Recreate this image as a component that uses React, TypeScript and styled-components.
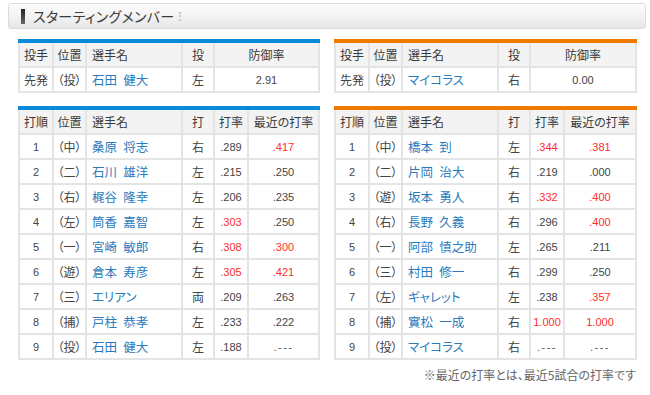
import styled, { createGlobalStyle } from 'styled-components';

const GlobalStyle = createGlobalStyle`
  body {
    margin: 0;
    background: #fff;
    font-family: 'Noto Sans CJK JP', 'Noto Sans', sans-serif;
    font-feature-settings: 'palt';
    color: #333;
  }
`;

const Page = styled.div`
  width: 650px;
  height: 395px;
  padding: 3px 0 0 8px;
  box-sizing: border-box;
`;

const TitleBar = styled.div`
  width: 638px;
  height: 26px;
  box-sizing: border-box;
  border: 1px solid #dcdcdc;
  border-radius: 3px;
  background: linear-gradient(#fcfcfc, #f3f3f3 50%, #e6e6e6);
  box-shadow: inset 0 1px 0 #fff;
  display: flex;
  align-items: center;
  padding-left: 12px;
`;

const TitleMark = styled.span`
  width: 4px;
  height: 15px;
  background: linear-gradient(#222, #666);
  margin-right: 8px;
`;

const TitleText = styled.h1`
  margin: 0;
  font-size: 14px;
  font-weight: normal;
  letter-spacing: 0.3px;
  color: #3a3a3a;
`;

const TitleDots = styled.span`
  width: 0;
  height: 9px;
  border-left: 2px dotted #c8c8c8;
  margin-left: 5px;
`;

const TeamGrid = styled.div<{ top: number }>`
  display: grid;
  grid-template-columns: 302px 303px;
  column-gap: 14px;
  margin: ${(p) => p.top}px 0 0 10px;
  align-items: start;
`;

const Table = styled.table<{ accent: string }>`
  width: 100%;
  border-collapse: collapse;
  border-top: 4px solid ${(p) => p.accent};
  table-layout: fixed;
  font-size: 12px;
`;

const Th = styled.th<{ left?: boolean }>`
  height: 23px;
  padding: 0 ${(p) => (p.left ? '5px' : '0')};
  border: 2px solid #e4e4e4;
  border-top: none;
  background: #f3f3f3;
  font-weight: normal;
  color: #3a3a3a;
  text-align: ${(p) => (p.left ? 'left' : 'center')};
  white-space: nowrap;
`;

const Td = styled.td<{ num?: boolean; hot?: boolean; left?: boolean }>`
  height: 23px;
  padding: 0 ${(p) => (p.left ? '5px' : '0')};
  border: 2px solid #e4e4e4;
  background: #fff;
  text-align: ${(p) => (p.left ? 'left' : 'center')};
  white-space: nowrap;
  color: ${(p) => (p.hot ? '#ff2d2d' : '#444')};
  font-family: ${(p) =>
    p.num ? "'Liberation Sans', Arial, sans-serif" : 'inherit'};
  font-size: ${(p) => (p.num ? '11px' : '12px')};
`;

const NoRecord = styled.span`
  letter-spacing: 1.5px;
  color: #555;
`;

const NameLink = styled.a`
  color: #2a7bbd;
  text-decoration: none;
  font-size: 12.5px;
`;

const Note = styled.p`
  margin: 7px 0 0;
  width: 628px;
  text-align: right;
  font-size: 12px;
  line-height: 16px;
  color: #666;
`;

const BLUE = '#0a8ad8';
const ORANGE = '#ee7a00';

type Batter = [string, string, string, string, string];

const home: Batter[] = [
  ['中', '桑原\u2002将志', '右', '.289', '.417'],
  ['二', '石川\u2002雄洋', '左', '.215', '.250'],
  ['右', '梶谷\u2002隆幸', '左', '.206', '.235'],
  ['左', '筒香\u2002嘉智', '左', '.303', '.250'],
  ['一', '宮崎\u2002敏郎', '右', '.308', '.300'],
  ['遊', '倉本\u2002寿彦', '左', '.305', '.421'],
  ['三', 'エリアン', '両', '.209', '.263'],
  ['捕', '戸柱\u2002恭孝', '左', '.233', '.222'],
  ['投', '石田\u2002健大', '左', '.188', '.---'],
];

const away: Batter[] = [
  ['中', '橋本\u2002到', '左', '.344', '.381'],
  ['二', '片岡\u2002治大', '右', '.219', '.000'],
  ['遊', '坂本\u2002勇人', '右', '.332', '.400'],
  ['右', '長野\u2002久義', '右', '.296', '.400'],
  ['一', '阿部\u2002慎之助', '左', '.265', '.211'],
  ['三', '村田\u2002修一', '右', '.299', '.250'],
  ['左', 'ギャレット', '左', '.238', '.357'],
  ['捕', '實松\u2002一成', '右', '1.000', '1.000'],
  ['投', 'マイコラス', '右', '.---', '.---'],
];

const isHot = (v: string) => v !== '.---' && parseFloat(v) >= 0.3;

const Stat = ({ value }: { value: string }) => (
  <Td num hot={isHot(value)}>
    {value === '.---' ? <NoRecord>{value}</NoRecord> : value}
  </Td>
);

function PitcherTable({ accent, name, hand, era }: { accent: string; name: string; hand: string; era: string }) {
  return (
    <Table accent={accent}>
      <colgroup>
        <col style={{ width: 34 }} />
        <col style={{ width: 33 }} />
        <col style={{ width: 96 }} />
        <col style={{ width: 32 }} />
        <col />
      </colgroup>
      <thead>
        <tr>
          <Th>投手</Th>
          <Th>位置</Th>
          <Th left>選手名</Th>
          <Th>投</Th>
          <Th>防御率</Th>
        </tr>
      </thead>
      <tbody>
        <tr>
          <Td>先発</Td>
          <Td>（投）</Td>
          <Td left>
            <NameLink>{name}</NameLink>
          </Td>
          <Td>{hand}</Td>
          <Td num>{era}</Td>
        </tr>
      </tbody>
    </Table>
  );
}

function LineupTable({ accent, rows }: { accent: string; rows: Batter[] }) {
  return (
    <Table accent={accent}>
      <colgroup>
        <col style={{ width: 34 }} />
        <col style={{ width: 33 }} />
        <col style={{ width: 96 }} />
        <col style={{ width: 32 }} />
        <col style={{ width: 34 }} />
        <col />
      </colgroup>
      <thead>
        <tr>
          <Th>打順</Th>
          <Th>位置</Th>
          <Th left>選手名</Th>
          <Th>打</Th>
          <Th>打率</Th>
          <Th>最近の打率</Th>
        </tr>
      </thead>
      <tbody>
        {rows.map(([pos, name, hand, avg, recent], i) => (
          <tr key={i}>
            <Td num>{i + 1}</Td>
            <Td>（{pos}）</Td>
            <Td left>
              <NameLink>{name}</NameLink>
            </Td>
            <Td>{hand}</Td>
            <Stat value={avg} />
            <Stat value={recent} />
          </tr>
        ))}
      </tbody>
    </Table>
  );
}

export default function App() {
  return (
    <Page>
      <GlobalStyle />
      <TitleBar>
        <TitleMark />
        <TitleText>スターティングメンバー</TitleText>
        <TitleDots />
      </TitleBar>
      <TeamGrid top={10}>
        <PitcherTable accent={BLUE} name={'石田\u2002健大'} hand="左" era="2.91" />
        <PitcherTable accent={ORANGE} name="マイコラス" hand="右" era="0.00" />
      </TeamGrid>
      <TeamGrid top={13}>
        <LineupTable accent={BLUE} rows={home} />
        <LineupTable accent={ORANGE} rows={away} />
      </TeamGrid>
      <Note>※最近の打率とは、最近5試合の打率です</Note>
    </Page>
  );
}
